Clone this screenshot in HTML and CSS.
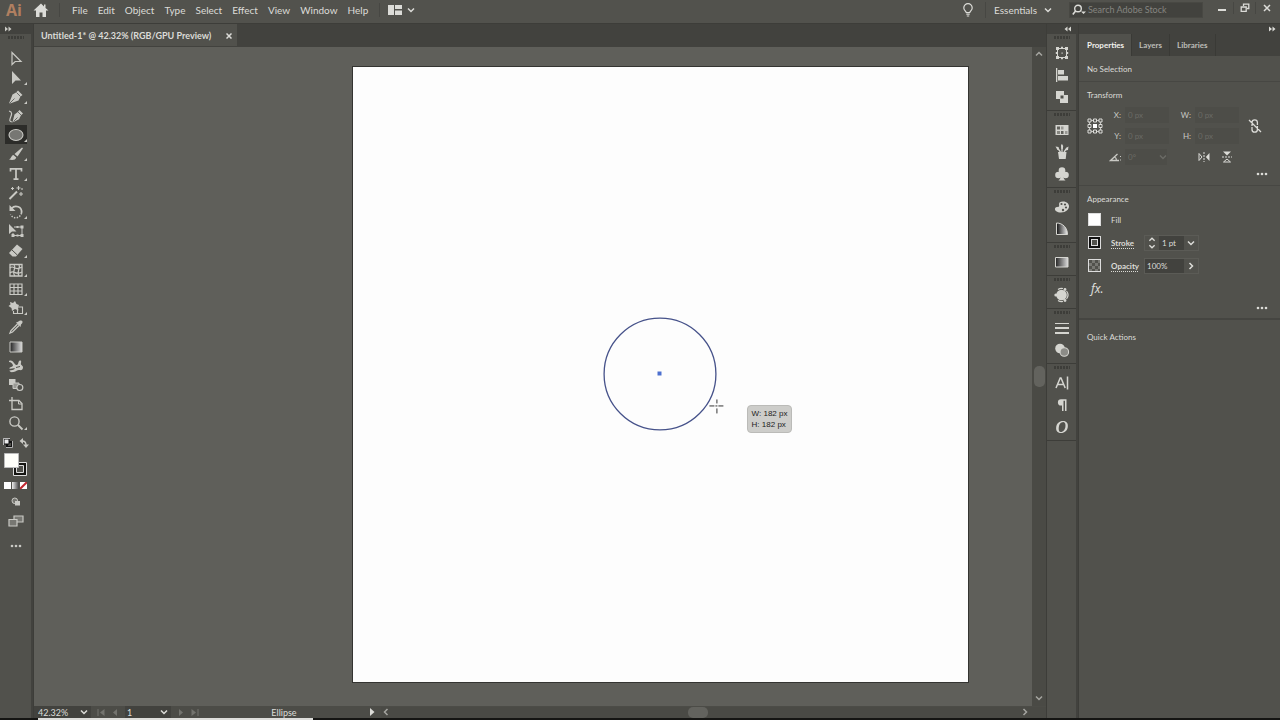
FILE: index.html
```html
<!DOCTYPE html>
<html lang="en">
<head>
<meta charset="utf-8">
<title>Untitled-1</title>
<link rel="stylesheet" href="styles.css">
</head>
<body>
<svg class="defs" aria-hidden="true">
  <symbol id="down" viewBox="0 0 8 8"><path d="M1 2.5l3 3 3-3" fill="none" stroke="currentColor" stroke-width="1.5"/></symbol>
  <symbol id="up" viewBox="0 0 8 8"><path d="M1 5.5l3-3 3 3" fill="none" stroke="currentColor" stroke-width="1.5"/></symbol>
  <symbol id="right" viewBox="0 0 8 8"><path d="M2.500 1l3 3-3 3" fill="none" stroke="currentColor" stroke-width="1.5"/></symbol>
  <symbol id="left" viewBox="0 0 8 8"><path d="M5.500 1l-3 3 3 3" fill="none" stroke="currentColor" stroke-width="1.5"/></symbol>
  <symbol id="expand" viewBox="0 0 8 6"><path d="M1 .5v5L4 3zM4.500 .5v5L7.500 3z" fill="currentColor"/></symbol>
  <symbol id="collapse" viewBox="0 0 8 6"><path d="M3.500 .5v5L.5 3zM7 .5v5L4 3z" fill="currentColor"/></symbol>
  <symbol id="dots" viewBox="0 0 12 4"><g fill="currentColor"><circle cx="2" cy="2" r="1.300"/><circle cx="6" cy="2" r="1.300"/><circle cx="10" cy="2" r="1.300"/></g></symbol>
</svg>

<header class="menubar">
  <span class="logo">Ai</span>
  <button class="home" aria-label="Home"><svg width="16" height="16" viewBox="0 0 16 16"><path d="M8 1.500L.5 8.500H3V15h3.500v-4.500h3V15H13V8.500h2.500L12.500 6V2.500h-1.500v2z" fill="currentColor"/></svg></button>
  <nav class="menus">
    <button>File</button><button>Edit</button><button>Object</button><button>Type</button><button>Select</button><button>Effect</button><button>View</button><button>Window</button><button>Help</button>
  </nav>
  <button class="arrange" aria-label="Arrange documents"><svg width="14" height="10" viewBox="0 0 14 10"><path d="M0 0h6v10H0zM7 0h7v4H7zM7 5.500h7V10H7z" fill="currentColor"/></svg><svg class="chev"><use href="#down"/></svg></button>
  <button class="bulb" aria-label="Learn"><svg width="12" height="14" viewBox="0 0 12 14"><path d="M4.200 9.500C4 8 1.800 7.200 1.800 4.900a4.200 4.200 0 0 1 8.400 0c0 2.300-2.200 3.100-2.400 4.600zM4.300 11.200h3.400M4.800 13h2.400" fill="none" stroke="currentColor" stroke-width="1.200"/></svg></button>
  <button class="workspace">Essentials <svg class="chev"><use href="#down"/></svg></button>
  <label class="search"><svg width="15" height="12" viewBox="0 0 15 12"><circle cx="6" cy="4.500" r="3.300" fill="none" stroke="currentColor" stroke-width="1.400"/><path d="M3.600 7L.8 10.500" stroke="currentColor" stroke-width="1.600"/><path d="M9 7.500h5l-2.500 2.500z" fill="currentColor"/></svg><input type="text" placeholder="Search Adobe Stock" aria-label="Search Adobe Stock"></label>
  <div class="window">
    <button aria-label="Minimize"><svg width="10" height="10" viewBox="0 0 10 10"><path d="M1 7h8" stroke="currentColor" stroke-width="2"/></svg></button>
    <button aria-label="Restore"><svg width="10" height="10" viewBox="0 0 10 10"><path d="M3.500 3V1.200h5.300v4.300H7M1.200 4h5v4.300h-5z" fill="none" stroke="currentColor" stroke-width="1.300"/></svg></button>
    <button aria-label="Close"><svg width="10" height="10" viewBox="0 0 10 10"><path d="M2 2l6 6M8 2L2 8" stroke="currentColor" stroke-width="1.500"/></svg></button>
  </div>
</header>

<div class="main">
  <aside class="toolbar">
    <button class="strip" aria-label="Expand tools"><svg width="8" height="6"><use href="#expand"/></svg></button>
    <span class="grip"></span>
    <div class="tools">
      <div class="group">
        <button class="tool" aria-label="Selection"><svg viewBox="0 0 16 16"><path d="M4 1.500v12l3.200-3H13z" fill="none" stroke="currentColor" stroke-width="1.200"/></svg></button>
        <button class="tool more" aria-label="Direct selection"><svg viewBox="0 0 16 16"><path d="M4 1v13l3.500-3.500H13z" fill="currentColor"/></svg></button>
        <button class="tool more" aria-label="Pen"><svg viewBox="0 0 16 16"><path d="M10 1.500l4.500 4.500-2 1.500-2 4L2 14.500l-.8-.6L4.500 5.500l3.500-2z" fill="currentColor"/><path d="M2 14l4.500-4.500M8.500 3.500l4 4" stroke="#51514c" stroke-width=".8"/></svg></button>
        <button class="tool" aria-label="Curvature"><svg viewBox="0 0 16 16"><path d="M11.500 2L15 5.500l-2 1.700-2 4L5.500 14l-.8-.6L6.500 6.500 9.800 4z" fill="currentColor"/><path d="M5.500 13.500l4-4M10 4l3.500 3.500" stroke="#51514c" stroke-width=".8"/><path d="M1 3c4 1 2.500 4 1.500 6.500S1 14 4.500 14" fill="none" stroke="currentColor" stroke-width="1.200"/></svg></button>
        <button class="tool more active" aria-label="Ellipse"><svg viewBox="0 0 16 16"><ellipse cx="8" cy="8" rx="7" ry="5.500" fill="#777773" stroke="currentColor" stroke-width="1.100"/></svg></button>
        <button class="tool more" aria-label="Paintbrush"><svg viewBox="0 0 16 16"><path d="M14 1.500l1 .8-5.500 8.200-3-2.500zM5.500 9l2.800 2.500c-.6 2.500-4 3-7.300 2C3.500 12.500 3 9.500 5.500 9z" fill="currentColor"/></svg></button>
      </div>
      <div class="group">
        <button class="tool more" aria-label="Type"><svg viewBox="0 0 16 16"><path d="M2.500 5.500V2.800h11v2.700M8 2.800v10.400M5.500 13.200h5" fill="none" stroke="currentColor" stroke-width="1.700"/></svg></button>
        <button class="tool" aria-label="Magic wand"><svg viewBox="0 0 16 16"><path d="M1.500 14L9 6.500" stroke="currentColor" stroke-width="2"/><path d="M10.500 1v4M8.500 3h4M4.500 2v3M3 3.500h3M13 7v4M11 9h4M14 3v2" stroke="currentColor" stroke-width="1.100"/></svg></button>
        <button class="tool more" aria-label="Rotate"><svg viewBox="0 0 16 16"><path d="M3.500 4.500c3.500-4 11-2 10 4.500" fill="none" stroke="currentColor" stroke-width="1.700"/><path d="M1.500 1v6h6z" fill="currentColor"/><path d="M13.500 9c-1 5-8 7-11 1.500" fill="none" stroke="currentColor" stroke-width="1.500" stroke-dasharray="1.400 1.400"/></svg></button>
        <button class="tool" aria-label="Free transform"><svg viewBox="0 0 16 16"><path d="M1 1v10l3-2.500h4.500z" fill="currentColor"/><path d="M6 4h8v8.500H5V10" fill="none" stroke="currentColor"/><path d="M12.500 2.500h3v3h-3zM12.500 11h3v3h-3zM3.500 11h3v3h-3zM8.500 3h2v2h-2zM8.500 11.500h2v2h-2z" fill="currentColor"/></svg></button>
      </div>
      <div class="group">
        <button class="tool more" aria-label="Eraser"><svg viewBox="0 0 16 16"><path d="M9 1.500L14.500 6 8 13.500H4.500L1 10z" fill="currentColor"/><path d="M4 7l5.300 5" stroke="#51514c"/></svg></button>
        <button class="tool more" aria-label="Shaper"><svg viewBox="0 0 16 16"><path d="M2 2.500h12v11.500H2z" fill="none" stroke="currentColor" stroke-width="1.300"/><path d="M2 6c4-4 4 4 12-1M2 11c4-4 5 3 12-1M6 2.500c3 4-3 7 1 11.500M11 2.500c2 4-3 7 0 11.500" fill="none" stroke="currentColor" stroke-width="1.200"/></svg></button>
        <button class="tool more" aria-label="Mesh grid"><svg viewBox="0 0 16 16"><path d="M2 3h12v10.500H2zM2 6.500h12M2 10h12M6 3v10.500M10 3v10.500" fill="none" stroke="currentColor" stroke-width="1.200"/></svg></button>
        <button class="tool more" aria-label="Shape builder"><svg viewBox="0 0 16 16"><path d="M2 2l3 1 2-2 1.500 3 2.500 1-1 2.500.5 3L7 9l-3 2-.5-3L.5 6l2-1.500z" fill="currentColor"/><path d="M10 7h4.500v6.500H5.500V11M9.500 9v4.500" fill="none" stroke="currentColor" stroke-width="1.100"/></svg></button>
        <button class="tool" aria-label="Eyedropper"><svg viewBox="0 0 16 16"><path d="M9.500 5L3 11.500 2 14l2.500-1L11 6.500" fill="none" stroke="currentColor" stroke-width="1.300"/><path d="M8 3.500l1.500-.5L12 1.500q2-.5 2.500 1T13 5.500l-.5 2.500z" fill="currentColor"/></svg></button>
      </div>
      <div class="group">
        <button class="tool" aria-label="Gradient"><svg viewBox="0 0 16 16"><linearGradient id="g1"><stop stop-color="#222"/><stop offset="1" stop-color="#ddd"/></linearGradient><path d="M2 3h12v10H2z" fill="url(#g1)" stroke="currentColor"/></svg></button>
        <button class="tool" aria-label="Puppet warp"><svg viewBox="0 0 16 16"><path d="M1 3c2-1 4 0 5 2 1.500 2 3 3 4 1 .5-2 1-4 2.500-3.500s0 3 .5 4 2 1 2 3-1.500 3-3.500 2.500-3 1.500-6 2-4-.5-4-1.500C3 12 6 12 7 10.500 5 10 3 11 1 10.500 2 9 4.500 9 5 7.500 4.500 5.500 3 4 1 4z" fill="currentColor"/><path d="M8 9.500l4-1" stroke="#51514c"/></svg></button>
        <button class="tool" aria-label="Blend"><svg viewBox="0 0 16 16"><path d="M1 2h6.500v6H1z" fill="currentColor"/><path d="M5 6h6v5.500H5z" fill="#999994" stroke="currentColor"/><circle cx="11.800" cy="10.500" r="3" fill="#51514c" stroke="currentColor" stroke-width="1.200"/></svg></button>
        <button class="tool" aria-label="Artboard"><svg viewBox="0 0 16 16"><path d="M4 1v12.500h10V7.500L11 4.500H1" fill="none" stroke="currentColor" stroke-width="1.300"/><path d="M10.500 4.500V8H14" fill="none" stroke="currentColor"/></svg></button>
        <button class="tool more" aria-label="Zoom"><svg viewBox="0 0 16 16"><circle cx="6.500" cy="6.500" r="4.600" fill="none" stroke="currentColor" stroke-width="1.400"/><path d="M10 10l4.500 4.500" stroke="currentColor" stroke-width="1.800"/></svg></button>
      </div>
    </div>
    <div class="swap">
      <button aria-label="Default fill and stroke"><svg width="10" height="10" viewBox="0 0 10 10"><path d="M4 4h5v5H4z" fill="none" stroke="#111" stroke-width="2"/><path d="M1 1h5v5H1z" fill="#eee" stroke="#111"/><path d="M.5 7V.5H7M9.500 3v6.500H3" fill="none" stroke="#ddd" stroke-width=".8"/></svg></button>
      <button aria-label="Swap fill and stroke"><svg width="10" height="10" viewBox="0 0 10 10"><path d="M3 3c3 0 4 1 4 4" fill="none" stroke="currentColor" stroke-width="1.300"/><path d="M4 0v6L.5 3zM4 6.500h6L7 10z" fill="currentColor"/></svg></button>
    </div>
    <button class="paint" aria-label="Fill and stroke"><svg width="24" height="24" viewBox="0 0 24 24"><path d="M9.500 9.500h13v13h-13z" fill="#151512" stroke="#ddd"/><path d="M12.500 12.500h7v7h-7z" fill="#51514c" stroke="#ddd"/><path d="M.5.5h14v14H.5z" fill="#fffffa" stroke="#bbb"/></svg></button>
    <div class="modes">
      <button class="solid" aria-label="Color"></button><button class="grad" aria-label="Gradient fill"></button><button class="none" aria-label="None"><svg width="7" height="7" viewBox="0 0 7 7"><path d="M0 7L7 0" stroke="#c22830" stroke-width="2"/></svg></button>
    </div>
    <button class="tool-low" aria-label="Drawing modes"><svg width="10" height="10" viewBox="0 0 10 10"><circle cx="3.800" cy="3.800" r="2.800" fill="#777772" stroke="currentColor"/><path d="M4 4h5v4.500H4z" fill="currentColor"/></svg></button>
    <button class="tool-low" aria-label="Screen mode"><svg width="16" height="12" viewBox="0 0 16 12"><path d="M6 1h9v6H6z" fill="#777772" stroke="currentColor" stroke-width="1.200"/><path d="M1 4.500h8V11H1z" fill="#777772" stroke="currentColor" stroke-width="1.200"/></svg></button>
    <button class="tool-low edit" aria-label="Edit toolbar"><svg width="12" height="4"><use href="#dots"/></svg></button>
  </aside>

  <section class="document">
    <div class="doctabs"><div class="doctab"><span>Untitled-1* @ 42.32% (RGB/GPU Preview)</span><button aria-label="Close document"><svg width="6" height="6" viewBox="0 0 6 6"><path d="M.5.5l5 5M5.500.5l-5 5" stroke="currentColor" stroke-width="1.500"/></svg></button></div></div>
    <div class="view">
      <div class="canvas">
        <div class="artboard">
          <svg viewBox="0 0 616 616">
            <circle cx="307.500" cy="307.500" r="56" fill="none" stroke="#46528a" stroke-width="1.300"/>
            <path d="M305 305h4v4h-4z" fill="#4d70cf"/>
            <path d="M357 339.500h5M366 339.500h5M364.500 333v4M364.500 342v5M363 339.500h2" stroke="#333" fill="none"/>
          </svg>
          <div class="measure">W: 182 px<br>H: 182 px</div>
        </div>
      </div>
      <div class="vscroll"><svg class="chev"><use href="#up"/></svg><span></span><svg class="chev"><use href="#down"/></svg></div>
    </div>
    <footer class="status">
      <div class="combo zoom"><input type="text" value="42.32%" aria-label="Zoom level"><button aria-label="Zoom presets"><svg class="chev"><use href="#down"/></svg></button></div>
      <div class="pager dim"><button aria-label="First"><svg width="8" height="7" viewBox="0 0 8 7"><path d="M1 0v7" stroke="currentColor"/><path d="M7.500 0v7L3 3.500z" fill="currentColor"/></svg></button><button aria-label="Previous"><svg width="8" height="7" viewBox="0 0 8 7"><path d="M6 0v7L2 3.500z" fill="currentColor"/></svg></button></div>
      <div class="combo board"><input type="text" value="1" aria-label="Artboard number"><button aria-label="Artboards"><svg class="chev"><use href="#down"/></svg></button></div>
      <div class="pager dim"><button aria-label="Next"><svg width="8" height="7" viewBox="0 0 8 7"><path d="M2 0v7l4-3.500z" fill="currentColor"/></svg></button><button aria-label="Last"><svg width="8" height="7" viewBox="0 0 8 7"><path d="M7 0v7" stroke="currentColor"/><path d="M.5 0v7L5 3.500z" fill="currentColor"/></svg></button></div>
      <span class="current">Ellipse</span>
      <button class="play" aria-label="Status options"><svg width="8" height="8" viewBox="0 0 8 8"><path d="M2 0v8l4.500-4z" fill="currentColor"/></svg></button>
      <div class="hscroll"><svg class="chev"><use href="#left"/></svg><span></span><svg class="chev"><use href="#right"/></svg></div>
    </footer>
  </section>

  <aside class="dock">
    <button class="strip" aria-label="Expand panels"><svg width="8" height="6"><use href="#collapse"/></svg></button>
    <div class="dockgroup"><span class="grip"></span>
      <button aria-label="Transform"><svg viewBox="0 0 16 16"><path d="M3.500 3.500h9v9h-9z" fill="none" stroke="currentColor"/><path d="M2 2h3v3H2zM11 2h3v3h-3zM2 11h3v3H2zM11 11h3v3h-3zM7 1.800h2v2H7zM7 12.200h2v2H7zM1.800 7h2v2h-2zM12.200 7h2v2h-2zM7.500 7.500h1.200v1.200H7.500z" fill="currentColor"/></svg></button>
      <button aria-label="Align"><svg viewBox="0 0 16 16"><path d="M2 1h1.300v14H2zM4 3h6v4.500H4zM4 9h10v4.500H4z" fill="currentColor"/></svg></button>
      <button aria-label="Pathfinder"><svg viewBox="0 0 16 16"><path d="M2 2h8v8H2zM6 6h8v8H6z" fill="currentColor"/><path d="M6.500 6.500h3v3h-3z" fill="#51514c"/></svg></button>
    </div>
    <div class="dockgroup"><span class="grip"></span>
      <button aria-label="Swatches"><svg viewBox="0 0 16 16"><path d="M1.500 3h13v10h-13z" fill="currentColor"/><path d="M3 4.500h3v3H3zM7 9h2.500v3H7z" fill="#62625d"/><path d="M7 4.500h2.500v3H7zM11 9h2.500v3H11z" fill="#9a9a95"/><path d="M3 9h3v3H3z" fill="#85857f"/></svg></button>
      <button aria-label="Brushes"><svg viewBox="0 0 16 16"><path d="M4 8h8.500l-.8 7H5z" fill="currentColor"/><path d="M6.500 8L3.500 4M8 8V2M10 8l3-4" stroke="currentColor" stroke-width="1.300"/><path d="M1.500 2.500l3 .5.500 2.500-1.500.5zM7 1l1-1 1.200 2-.5 3H7.500zM14.500 2.500L12 4l-.5 2.500L14 6z" fill="currentColor"/></svg></button>
      <button aria-label="Symbols"><svg viewBox="0 0 16 16"><g fill="currentColor"><circle cx="8" cy="4.500" r="3.300"/><circle cx="4.500" cy="9" r="3.300"/><circle cx="11.500" cy="9" r="3.300"/><path d="M7 7h2c0 4 .5 6 2.500 7.500h-7C6.500 13 7 11 7 7z"/></g></svg></button>
    </div>
    <div class="dockgroup"><span class="grip"></span>
      <button aria-label="Color"><svg viewBox="0 0 16 16"><path d="M9 2.500c4 0 6 2.500 6 5s-3 6-8 6c-4 0-6.500-2-6-4s3-1 4-2-2-5 4-5z" fill="currentColor"/><g fill="#51514c"><circle cx="7.500" cy="5" r="1.100"/><circle cx="11" cy="5.500" r="1.100"/><circle cx="12" cy="8.500" r="1.100"/><circle cx="9" cy="11" r="1.200"/></g></svg></button>
      <button aria-label="Color guide"><svg viewBox="0 0 16 16"><linearGradient id="g2"><stop stop-color="#111"/><stop offset="1" stop-color="#eee"/></linearGradient><path d="M2.500 2C9 2 13.500 7 13.500 13.500h-11z" fill="url(#g2)" stroke="currentColor"/></svg></button>
    </div>
    <div class="dockgroup"><span class="grip"></span>
      <button aria-label="Gradient panel"><svg viewBox="0 0 16 16"><path d="M1.500 3.500h12.500v9.500H1.500z" fill="url(#g1)" stroke="currentColor"/></svg></button>
    </div>
    <div class="dockgroup"><span class="grip"></span>
      <button aria-label="Recolor"><svg viewBox="0 0 16 16"><circle cx="7.500" cy="8" r="5.300" fill="currentColor"/><path d="M4 2.500a6.500 6.500 0 0 1 5-1M12.500 4a6.500 6.500 0 0 1 0 8M9 14.500a6.500 6.500 0 0 1-5-1" fill="none" stroke="currentColor" stroke-width="1.200"/><circle cx="1.800" cy="8" r="1.500" fill="currentColor"/><circle cx="11" cy="13.500" r="1.400" fill="currentColor"/><circle cx="11" cy="2.500" r="1.400" fill="currentColor"/></svg></button>
    </div>
    <div class="dockgroup"><span class="grip"></span>
      <button aria-label="Stroke panel"><svg viewBox="0 0 16 16"><path d="M1 3h14v1H1zM1 7h14v2H1zM1 12h14v2H1z" fill="currentColor"/></svg></button>
      <button aria-label="Transparency"><svg viewBox="0 0 16 16"><circle cx="6" cy="6.500" r="4.800" fill="currentColor"/><circle cx="10.300" cy="10" r="4.300" fill="#8c8c87" stroke="currentColor" stroke-width="1.100"/></svg></button>
    </div>
    <div class="dockgroup"><span class="grip"></span>
      <button aria-label="Character"><svg viewBox="0 0 16 16"><path d="M2 13L6.200 3h.8l4.200 10M3.500 9.500h6.200M13.500 1.500v13" fill="none" stroke="currentColor" stroke-width="1.500"/></svg></button>
      <button aria-label="Paragraph"><svg viewBox="0 0 16 16"><path d="M8 8.500H7a3 3 0 0 1 0-6.200h5.500V14H11V3.800H9.500V14H8z" fill="currentColor"/></svg></button>
      <button aria-label="OpenType"><svg viewBox="0 0 16 16"><path fill-rule="evenodd" d="M9 2c3.700 0 5.300 2.500 4.800 6s-3 6-6.800 6-5.300-2.500-4.800-6S5.200 2 9 2zm.3.900C6.500 2.900 5.200 5 4.800 8s.3 5.100 2 5.100 4.200-2.100 4.600-5.100-.2-5.100-2.100-5.100z" fill="currentColor"/></svg></button>
    </div>
  </aside>

  <aside class="properties">
    <button class="strip" aria-label="Collapse panels"><svg width="8" height="6"><use href="#expand"/></svg></button>
    <div class="tabs"><button class="on">Properties</button><button>Layers</button><button>Libraries</button></div>
    <section class="selection">No Selection</section>
    <section class="transform">
      <h2>Transform</h2>
      <div class="fields">
        <svg class="ref" width="16" height="16" viewBox="0 0 16 16"><path d="M2.500 2.500h11v11h-11z" fill="none" stroke="currentColor" stroke-width=".8"/><g fill="#51514c" stroke="currentColor"><path d="M1 1h3v3H1zM6.500 1h3v3h-3zM12 1h3v3h-3zM1 6.500h3v3H1zM12 6.500h3v3h-3zM1 12h3v3H1zM6.500 12h3v3h-3zM12 12h3v3h-3z"/></g><path d="M6 6h4v4H6z" fill="#fff"/></svg>
        <label for="x">X:</label><input id="x" type="text" value="0 px" disabled>
        <label for="w">W:</label><input id="w" type="text" value="0 px" disabled>
        <button class="link" aria-label="Constrain proportions"><svg width="14" height="16" viewBox="0 0 14 16"><path d="M4 8V4.500a2.700 2.700 0 0 1 5.400 0V7M4 9v2.500a2.700 2.700 0 0 0 5.400 0V8M1 2l12 12" fill="none" stroke="currentColor" stroke-width="1.300"/></svg></button>
        <label for="y">Y:</label><input id="y" type="text" value="0 px" disabled>
        <label for="h">H:</label><input id="h" type="text" value="0 px" disabled>
        <label for="a" aria-label="Angle"><svg width="12" height="9" viewBox="0 0 12 9"><path d="M8.500 1L1.500 7.500h8.500M5.500 4c1.500.5 2 2 2 3.500" fill="none" stroke="currentColor" stroke-width="1.300"/><path d="M11 3h1v1h-1zM11 6.500h1v1h-1z" fill="currentColor"/></svg></label>
        <div class="angle"><input id="a" type="text" value="0°" disabled><svg class="chev"><use href="#down"/></svg></div>
        <div class="flips">
          <button aria-label="Flip horizontal"><svg width="12" height="10" viewBox="0 0 12 10"><path d="M1 1.500v7L4 5z" fill="none" stroke="currentColor"/><path d="M11.500 1v8L7.800 5z" fill="currentColor"/><path d="M6 0v10" stroke="currentColor" stroke-dasharray="2 1"/></svg></button>
          <button aria-label="Flip vertical"><svg width="10" height="12" viewBox="0 0 10 12"><path d="M1.500 11h7L5 8z" fill="none" stroke="currentColor"/><path d="M1 .5h8L5 4.500z" fill="currentColor"/><path d="M0 6h10" stroke="currentColor" stroke-dasharray="2 1"/></svg></button>
        </div>
      </div>
      <button class="options" aria-label="More transform options"><svg width="12" height="4"><use href="#dots"/></svg></button>
    </section>
    <section class="appearance">
      <h2>Appearance</h2>
      <div class="row"><button class="swatch fill" aria-label="Fill color"></button><span class="name">Fill</span></div>
      <div class="row"><button class="swatch stroke" aria-label="Stroke color"></button><label class="name under" for="sw">Stroke</label>
        <div class="value"><span class="spin"><svg class="chev"><use href="#up"/></svg><svg class="chev"><use href="#down"/></svg></span><input id="sw" type="text" value="1 pt"><button aria-label="Stroke presets"><svg class="chev"><use href="#down"/></svg></button></div></div>
      <div class="row"><button class="swatch opacity" aria-label="Opacity mask"></button><label class="name under" for="op">Opacity</label>
        <div class="value"><input id="op" type="text" value="100%"><button aria-label="Opacity slider"><svg class="chev"><use href="#right"/></svg></button></div></div>
      <button class="fx">fx.</button>
      <button class="options" aria-label="More appearance options"><svg width="12" height="4"><use href="#dots"/></svg></button>
    </section>
    <section class="quick"><h2>Quick Actions</h2></section>
  </aside>
</div>
<div class="taskbar"><span></span></div>
</body>
</html>
```
FILE: styles.css
```css
* { box-sizing: border-box; }
body {
  margin: 0;
  height: 100vh;
  display: flex;
  flex-direction: column;
  overflow: hidden;
  background: #3d3d39;
  color: #dcdcd8;
  font: 8px/14px Lato, "Open Sans", sans-serif;
}
button, input { font: inherit; color: inherit; background: none; border: 0; padding: 0; margin: 0; min-width: 0; }
button { display: flex; align-items: center; justify-content: center; }
svg { display: block; flex: none; }
h2 { margin: 0; font: inherit; }
.defs { position: absolute; width: 0; height: 0; }
.chev { width: 8px; height: 8px; }

.menubar { display: flex; align-items: center; height: 23px; padding-bottom: 3px; background: #52524d; flex: none; font-size: 10px; }
.logo { width: 26px; padding-left: 6px; color: #b07f60; font: 700 16px/20px "Open Sans", sans-serif; }
.home { width: 34px; height: 14px; border-right: 1px solid #474743; padding-right: 4px; }
.menus { display: flex; gap: 10px; padding: 0 11px 0 12px; }
.arrange { gap: 5px; padding-left: 8px; height: 14px; border-left: 1px solid #474743; }
.bulb { margin-left: auto; width: 26px; height: 16px; padding-right: 10px; border-right: 1px solid #474743; }
.workspace { gap: 7px; padding: 0 17px 0 8px; }
.search { display: flex; align-items: center; gap: 1px; width: 134px; height: 16px; padding-left: 2px; background: #42423e; border: 1px solid #484843; }
.search input { width: 110px; outline: 0; font-size: 9px; }
.search input::placeholder { color: #858580; opacity: 1; }
.window { display: flex; padding: 0 3px 5px 8px; }
.window button { width: 22px; height: 12px; }
.window button + button { border-left: 1px solid #474743; }

.main { display: flex; flex: 1; min-height: 0; gap: 1px; padding-top: 1px; }
.strip { width: 100%; height: 10px; padding: 0 4px; background: #42423e; flex: none; }
.grip { display: block; width: 16px; height: 3px; background: repeating-linear-gradient(90deg, #3d3d39 0 2px, #51514c 2px 3px); }

.toolbar { display: flex; flex-direction: column; align-items: center; width: 33px; background: #51514c; border-right: 2px solid #42423e; color: #c9c9c4; flex: none; }
.toolbar .strip { justify-content: flex-start; }
.toolbar .grip { margin: 2px 0 10px; }
.tools { display: flex; flex-direction: column; gap: 1px; }
.tool { position: relative; width: 22px; height: 19px; }
.tool svg { width: 16px; height: 16px; }
.tool.active { background: #2c2c29; }
.tool.more::after { content: ""; position: absolute; right: 0; bottom: 2px; border-left: 3px solid transparent; border-bottom: 3px solid #c9c9c4; }
.swap { display: flex; gap: 6px; padding: 6px 0 5px; }
.modes { display: flex; gap: 1px; margin: 5px 0 3px; }
.modes button { width: 7px; height: 7px; background: #fff; }
.modes .grad { background: linear-gradient(90deg, #eee, #444); }
.tool-low { height: 19px; width: 22px; }
.edit { margin-top: 6px; }

.document { display: flex; flex-direction: column; flex: 1; min-width: 0; }
.doctabs { display: flex; height: 23px; background: #42423e; flex: none; }
.doctab { display: flex; align-items: center; gap: 15px; height: 22px; padding: 1px 5px 0 7px; background: #51514c; font-weight: 700; font-size: 9px; }
.view { display: flex; flex: 1; min-height: 0; }
.canvas { position: relative; flex: 1; overflow: hidden; background: #5f5f5a; }
.artboard { position: absolute; left: 318px; top: 19px; bottom: 23px; aspect-ratio: 1; background: #fdfdfd; border: 1px solid #343431; }
.artboard > svg { width: 100%; height: 100%; }
.measure { position: absolute; left: 64%; top: 55%; padding: 2px 4px; border: 1px solid #bbbbb8; border-radius: 4px; background: #cdcdca; color: #222; font: 8px/11px "Liberation Sans", sans-serif; white-space: nowrap; }
.vscroll { display: flex; flex-direction: column; align-items: center; justify-content: space-between; width: 14px; padding: 3px 0 4px; background: #4a4a45; color: #a5a5a0; }
.vscroll span { width: 11px; height: 21px; border-radius: 5px; background: #63635e; }

.status { display: flex; align-items: center; height: 12px; background: #4c4c47; flex: none; font-size: 9px; line-height: 12px; overflow: hidden; }
.combo { display: flex; height: 12px; background: #42423e; }
.combo input { padding: 1px 0 0 4px; }
.combo button { width: 14px; }
.zoom { width: 57px; }
.zoom input { width: 43px; }
.board { width: 46px; }
.board input { width: 32px; padding-left: 2px; }
.pager { display: flex; gap: 6px; padding: 0 6px; }
.dim { color: #73736e; }
.current { flex: 0 0 158px; text-align: center; padding-top: 1px; }
.play { width: 18px; }
.hscroll { display: flex; align-items: center; justify-content: space-between; flex: 1; padding: 0 17px 0 1px; background: #4a4a45; color: #a5a5a0; }
.hscroll span { width: 20px; height: 11px; margin-right: 16px; border-radius: 5px; background: #63635e; }

.dock { width: 31px; background: #51514c; border-right: 2px solid #42423e; flex: none; color: #d5d5d0; }
.dock .strip { justify-content: flex-end; }
.dockgroup { display: flex; flex-direction: column; align-items: center; padding: 0 0 2px 1px; border-bottom: 1px solid #3d3d39; }
.dockgroup .grip { margin: 2px 0 3px; }
.dockgroup button { width: 24px; height: 22px; }
.dockgroup svg { width: 16px; height: 16px; }

.properties { width: 201px; background: #51514c; flex: none; }
.properties .strip { justify-content: flex-end; }
.tabs { display: flex; height: 22px; background: #42423e; color: #bdbdb8; font-weight: 700; }
.tabs button { padding: 0 7px 1px; border-right: 1px solid #3a3a36; }
.tabs .on { padding-left: 8px; background: #51514c; color: #f2f2ee; }
.properties section { padding: 0 12px 0 8px; border-bottom: 1px solid #474743; }
.properties section.selection { padding-top: 6px; height: 26px; }
.properties section.transform { padding-top: 6px; height: 104px; }
.fields { display: grid; grid-template-columns: 16px 22px 44px 26px 44px 1fr; grid-auto-rows: 18px; row-gap: 3px; padding-top: 4px; align-items: center; }
.fields label { justify-self: end; padding-right: 4px; color: #c9c9c4; }
.fields input { width: 100%; height: 16px; padding-left: 3px; background: #4d4d48; color: #6b6b66; }
.ref { grid-row: 1 / 3; }
.link { grid-row: 1 / 3; grid-column: 6; justify-self: end; margin-right: 6px; }
.fields label[for="y"], .fields label[for="a"] { grid-column: 2; }
.angle { display: flex; align-items: center; width: 42px; background: #4d4d48; color: #6b6b66; }
.angle input { flex: 1; }
.flips { grid-column: 4 / 7; display: flex; gap: 12px; padding-left: 29px; }
.options { margin-left: auto; height: 10px; }
.transform .options { margin-top: 3px; }
.properties section.appearance { padding-top: 6px; height: 134px; border-bottom: 2px solid #454541; }
.row { display: flex; align-items: center; height: 23px; padding-left: 1px; }
.appearance h2 { height: 16px; }
.swatch { width: 13px; height: 13px; border: 1px solid #ddd; }
.fill { background: #fff; }
.stroke { background: #51514c; box-shadow: inset 0 0 0 2px #111, inset 0 0 0 3px #ddd; }
.opacity { background: repeating-conic-gradient(#777772 0 25%, #51514c 0 50%) 0 0 / 6px 6px; }
.name { width: 33px; margin-left: 10px; }
.under { font-weight: 700; text-decoration: underline dotted; text-underline-offset: 2px; }
.value { display: flex; height: 16px; border: 1px solid #5b5b56; }
.value input { width: 25px; padding-left: 3px; background: #42423e; }
.value > input:first-child { width: 39px; padding-left: 2px; }
.value button { width: 14px; }
.spin { width: 14px; display: flex; flex-direction: column; align-items: center; justify-content: center; }
.spin .chev { width: 8px; height: 7px; }
.fx { margin: 3px 0 0 4px; font: italic 12px/16px "Noto Sans", sans-serif; height: 18px; }
.appearance .options { margin-top: 5px; }
.properties section.quick { padding-top: 10px; border: 0; }

.taskbar { height: 2px; background: #151513; padding-left: 38px; flex: none; }
.taskbar span { display: block; width: 275px; height: 2px; background: #dededb; }
```
